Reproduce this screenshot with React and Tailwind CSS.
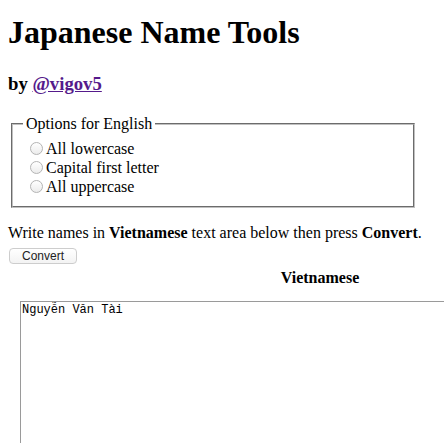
import { useState } from "react";

const OPTIONS = ["All lowercase", "Capital first letter", "All uppercase"];

export default function App() {
  const [mode, setMode] = useState(null);
  const [text, setText] = useState("Nguyễn Văn Tài");

  return (
    <div className="h-[443px] w-[444px] overflow-hidden bg-white pl-[8px] text-black font-['Liberation_Serif','Times_New_Roman',serif]">
      {/* HEADER */}
      <h1 className="mt-[14px] text-[32px] leading-[37px] font-bold whitespace-nowrap">
        Japanese Name Tools
      </h1>
      <h3 className="mt-[22px] text-[18.72px] leading-[22px] font-bold">
        by{" "}
        <a href="#" className="text-[#551a8b] underline">
          @vigov5
        </a>
      </h3>

      {/* OPTIONS */}
      <fieldset className="mt-[20px] ml-[3px] w-[404px] border-2 border-[#c0c0c0] [border-style:groove] pl-[13px] pt-[6px] pb-[10px]">
        <legend className="-ml-[3px] px-[3px] text-[16px] leading-[18px]">
          Options for English
        </legend>
        <div className="pl-[4px]">
          {OPTIONS.map((opt, i) => (
            <label
              key={opt}
              className="flex h-[19px] items-center gap-[3px] text-[16px] leading-[18px] cursor-default"
              onClick={() => setMode(i)}
            >
              <span className="flex h-[13px] w-[13px] items-center justify-center rounded-full border border-[#b4b4b4] bg-gradient-to-b from-white to-[#ececec]">
                {mode === i && (
                  <span className="h-[5px] w-[5px] rounded-full bg-[#333]" />
                )}
              </span>
              {opt}
            </label>
          ))}
        </div>
      </fieldset>

      {/* INSTRUCTIONS */}
      <p className="mt-[16px] text-[16px] leading-[18px] whitespace-nowrap">
        Write names in <b>Vietnamese</b> text area below then press{" "}
        <b>Convert</b>.
      </p>
      <button className="mt-[6px] ml-[1px] flex h-[16px] w-[68px] items-center justify-center rounded-[4px] border border-[#cdcdcd] bg-gradient-to-b from-white to-[#f3f3f3] text-[12px] leading-none text-[#222] font-['Liberation_Sans',Arial,sans-serif]">
        Convert
      </button>

      {/* TABLE */}
      <div className="w-[620px]">
        <div className="mt-[5px] pl-[12px] w-[612px] text-center text-[16px] leading-[18px] font-bold">
          Vietnamese
        </div>
        <textarea
          value={text}
          onChange={(e) => setText(e.target.value)}
          spellCheck={false}
          className="mt-[14px] ml-[12px] block h-[200px] w-[600px] resize-none border border-[#9a9a9a] px-[1px] pt-[1px] text-[12px] leading-[14px] outline-none font-['Liberation_Mono','Courier_New',monospace]"
        />
      </div>
    </div>
  );
}
